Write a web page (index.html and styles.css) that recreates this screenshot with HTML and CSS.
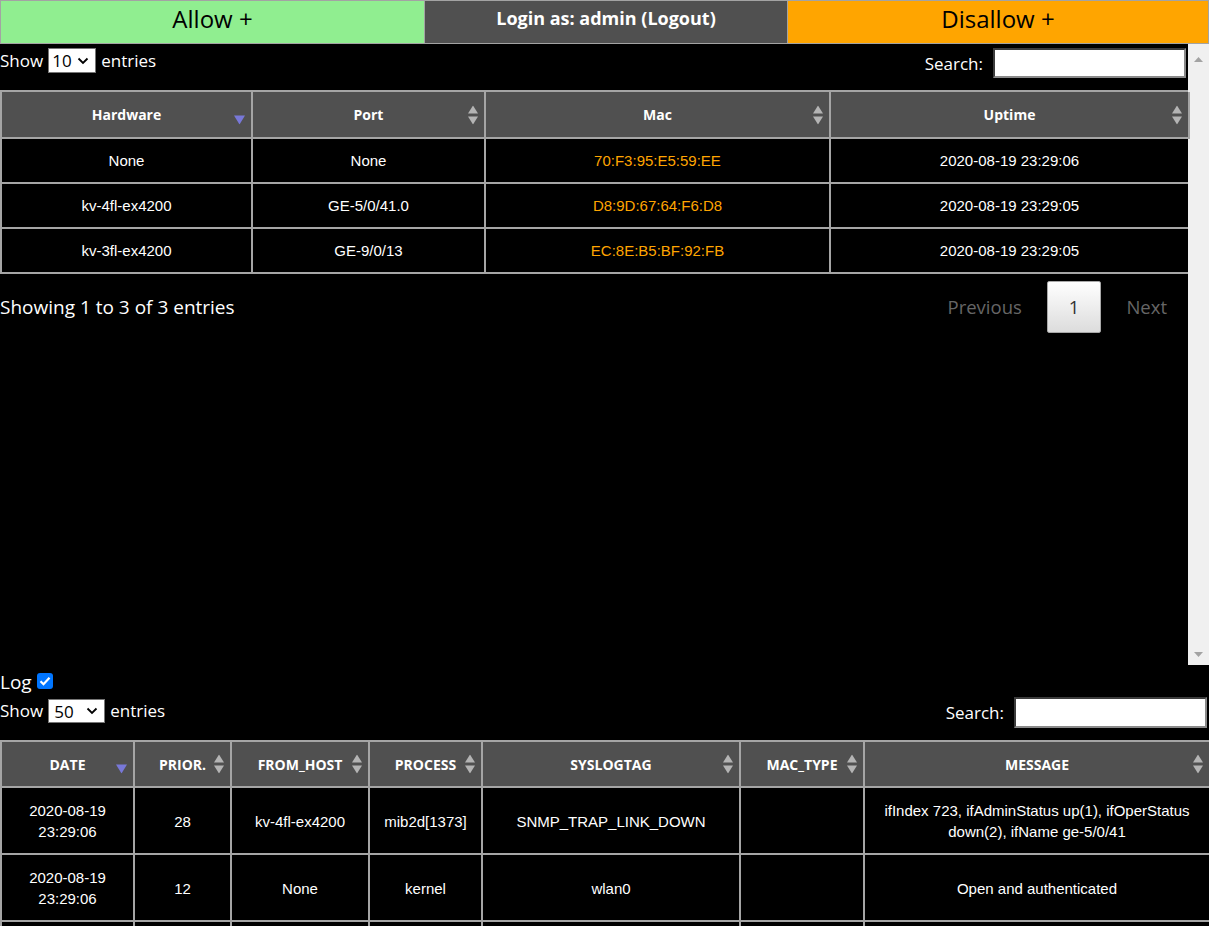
FILE: index.html
```html
<!DOCTYPE html>
<html lang="en">
<head>
<meta charset="utf-8">
<title>MAC access</title>
<link rel="stylesheet" href="styles.css">
</head>
<body>
<div class="topbar">
  <div class="tb allow">Allow +</div>
  <div class="tb login">Login as: admin (Logout)</div>
  <div class="tb disallow">Disallow +</div>
</div>

<div class="upper">
  <div class="upper-main">
    <div class="dt-top">
      <label class="length">Show <select class="sel sel10"><option>10</option></select> entries</label>
      <label class="search">Search: <input type="text" class="inp"></label>
    </div>
    <table class="dt dt-main">
      <colgroup><col class="w-hw"><col class="w-port"><col class="w-mac"><col class="w-up"></colgroup>
      <thead>
        <tr>
          <th>Hardware<svg class="sort desc" width="11" height="19" viewBox="0 0 11 19"><path d="M5.5 0L10.5 8H0.5Z"/><path d="M0 10H11L5.5 19Z"/></svg></th>
          <th>Port<svg class="sort" width="10" height="19" viewBox="0 0 10 19"><path d="M5 0L10 8H0Z"/><path d="M0 11H10L5 19Z"/></svg></th>
          <th>Mac<svg class="sort" width="10" height="19" viewBox="0 0 10 19"><path d="M5 0L10 8H0Z"/><path d="M0 11H10L5 19Z"/></svg></th>
          <th>Uptime<svg class="sort" width="10" height="19" viewBox="0 0 10 19"><path d="M5 0L10 8H0Z"/><path d="M0 11H10L5 19Z"/></svg></th>
        </tr>
      </thead>
      <tbody>
        <tr><td>None</td><td>None</td><td class="mac">70:F3:95:E5:59:EE</td><td>2020-08-19 23:29:06</td></tr>
        <tr><td>kv-4fl-ex4200</td><td>GE-5/0/41.0</td><td class="mac">D8:9D:67:64:F6:D8</td><td>2020-08-19 23:29:05</td></tr>
        <tr><td>kv-3fl-ex4200</td><td>GE-9/0/13</td><td class="mac">EC:8E:B5:BF:92:FB</td><td>2020-08-19 23:29:05</td></tr>
      </tbody>
    </table>
    <div class="dt-bottom">
      <div class="info">Showing 1 to 3 of 3 entries</div>
      <div class="paging">
        <span class="pg dis">Previous</span>
        <span class="pg cur">1</span>
        <span class="pg dis">Next</span>
      </div>
    </div>
  </div>
  <div class="vscroll">
    <svg width="9" height="5" viewBox="0 0 9 5"><path d="M4.5 0L9 5H0Z" fill="#a3a3a3"/></svg>
    <svg width="9" height="5" viewBox="0 0 9 5"><path d="M0 0H9L4.5 5Z" fill="#a3a3a3"/></svg>
  </div>
</div>

<div class="log-title">Log <input type="checkbox" class="chk" checked></div>
<div class="dt-top log-top">
  <label class="length">Show <select class="sel sel50"><option>50</option></select> entries</label>
  <label class="search">Search: <input type="text" class="inp"></label>
</div>
<table class="dt dt-log">
  <colgroup><col class="w-date"><col class="w-prio"><col class="w-host"><col class="w-proc"><col class="w-tag"><col class="w-mtype"><col class="w-msg"></colgroup>
  <thead>
    <tr>
      <th>DATE<svg class="sort desc" width="11" height="19" viewBox="0 0 11 19"><path d="M5.5 0L10.5 8H0.5Z"/><path d="M0 10H11L5.5 19Z"/></svg></th>
      <th>PRIOR.<svg class="sort" width="10" height="19" viewBox="0 0 10 19"><path d="M5 0L10 8H0Z"/><path d="M0 11H10L5 19Z"/></svg></th>
      <th>FROM_HOST<svg class="sort" width="10" height="19" viewBox="0 0 10 19"><path d="M5 0L10 8H0Z"/><path d="M0 11H10L5 19Z"/></svg></th>
      <th>PROCESS<svg class="sort" width="10" height="19" viewBox="0 0 10 19"><path d="M5 0L10 8H0Z"/><path d="M0 11H10L5 19Z"/></svg></th>
      <th>SYSLOGTAG<svg class="sort" width="10" height="19" viewBox="0 0 10 19"><path d="M5 0L10 8H0Z"/><path d="M0 11H10L5 19Z"/></svg></th>
      <th>MAC_TYPE<svg class="sort" width="10" height="19" viewBox="0 0 10 19"><path d="M5 0L10 8H0Z"/><path d="M0 11H10L5 19Z"/></svg></th>
      <th>MESSAGE<svg class="sort" width="10" height="19" viewBox="0 0 10 19"><path d="M5 0L10 8H0Z"/><path d="M0 11H10L5 19Z"/></svg></th>
    </tr>
  </thead>
  <tbody>
    <tr><td>2020-08-19 23:29:06</td><td>28</td><td>kv-4fl-ex4200</td><td>mib2d[1373]</td><td>SNMP_TRAP_LINK_DOWN</td><td></td><td>ifIndex 723, ifAdminStatus up(1), ifOperStatus down(2), ifName ge-5/0/41</td></tr>
    <tr><td>2020-08-19 23:29:06</td><td>12</td><td>None</td><td>kernel</td><td>wlan0</td><td></td><td>Open and authenticated</td></tr>
    <tr><td>2020-08-19 23:29:05</td><td>28</td><td>kv-3fl-ex4200</td><td>mib2d[1373]</td><td>SNMP_TRAP_LINK_DOWN</td><td></td><td>ifIndex 731, ifAdminStatus up(1), ifOperStatus down(2), ifName ge-9/0/13</td></tr>
  </tbody>
</table>
</body>
</html>
```
FILE: styles.css
```css
* { box-sizing: border-box; }
html, body { margin: 0; padding: 0; background: #000; overflow: hidden; }
body { font-family: "Open Sans", "Noto Sans", sans-serif; color: #fff; }

/* top bar */
.topbar {
  display: grid;
  grid-template-columns: 424px 363px 1fr;
  height: 44px;
  border-top: 1px solid #a3a3a3;
  border-bottom: 1px solid #a3a3a3;
}
.tb {
  display: flex;
  align-items: center;
  justify-content: center;
  border-left: 1px solid #a3a3a3;
}
.allow { background: #90ee90; color: #000; font-size: 24px; padding-bottom: 8px; }
.login { background: #505050; color: #fff; font-size: 18px; font-weight: 700; padding-bottom: 8px; }
.disallow { background: #ffa500; color: #000; font-size: 24px; padding-bottom: 8px; border-right: 1px solid #a3a3a3; }

/* upper scroll pane */
.upper { display: flex; height: 621px; }
.upper-main { flex: 1; min-width: 0; }
.vscroll {
  width: 21px;
  background: #f0f0f0;
  display: flex;
  flex-direction: column;
  justify-content: space-between;
  align-items: center;
  padding: 13px 0 8px;
}

/* controls */
.dt-top {
  display: flex;
  justify-content: space-between;
  align-items: flex-start;
  height: 46px;
  padding-top: 4px;
}
.length { display: flex; align-items: center; gap: 5px; font-size: 17px; line-height: 25px; }
.sel {
  appearance: none;
  -webkit-appearance: none;
  height: 25px;
  width: 48px;
  margin: 0;
  padding: 0 0 0 3px;
  border: 1px solid #767676;
  border-radius: 0;
  background: #fff url("data:image/svg+xml,%3Csvg xmlns='http://www.w3.org/2000/svg' width='12' height='8' viewBox='0 0 12 8'%3E%3Cpath d='M1.5 1.5l4.5 4.5 4.5-4.5' fill='none' stroke='%23000' stroke-width='1.8'/%3E%3C/svg%3E") no-repeat right 6px center;
  color: #000;
  font-family: "Open Sans", "Noto Sans", sans-serif;
  font-size: 17px;
  line-height: 23px;
}
.sel50 { width: 57px; height: 24px; padding-left: 5px; }
.search { display: flex; align-items: center; gap: 10px; font-size: 17px; margin-right: 2px; }
.inp {
  width: 193px;
  height: 30px;
  margin: 0;
  border: 2px solid;
  border-color: #3c3c3c #8a8a8a #8a8a8a #3c3c3c;
  background: #fff;
}

/* tables */
.dt {
  width: 100%;
  table-layout: fixed;
  border-collapse: separate;
  border-spacing: 0;
  border-top: 2px solid #a5a5a5;
  border-left: 2px solid #a5a5a5;
}
.dt th, .dt td {
  border-right: 2px solid #a5a5a5;
  border-bottom: 2px solid #a5a5a5;
  text-align: center;
  vertical-align: middle;
}
.dt th {
  position: relative;
  background: #505050;
  color: #fff;
  font-family: "Open Sans", "Noto Sans", sans-serif;
  font-size: 14px;
  font-weight: 700;
  white-space: nowrap;
  padding: 0 10px;
}
.dt td {
  font-family: "Liberation Sans", Arial, sans-serif;
  font-size: 15px;
  line-height: 21px;
  color: #fff;
  background: #000;
}
.dt-main th { height: 47px; }
.dt-main td { height: 45px; padding: 0 8px; }
.dt-main td.mac { color: #ffa500; }

.w-hw { width: 251px; }
.w-port { width: 233px; }
.w-mac { width: 345px; }
.w-up { width: 359px; }

.dt-log th { height: 46px; }
.dt-log td { padding: 12px 8px 11px; }
.w-date { width: 133px; }
.w-prio { width: 97px; }
.w-host { width: 138px; }
.w-proc { width: 113px; }
.w-tag { width: 258px; }
.w-mtype { width: 124px; }
.w-msg { width: 346px; }

.sort {
  position: absolute;
  right: 6px;
  top: 50%;
  transform: translateY(-50%);
}
.sort path { fill: #b4b4b4; }
.sort.desc path:first-child { fill: none; }
.sort.desc path:last-child { fill: #7878d8; }

/* bottom of the upper table */
.dt-bottom {
  display: flex;
  justify-content: space-between;
  align-items: center;
  padding-top: 6px;
}
.info { font-size: 19px; line-height: 26px; }
.paging { display: flex; align-items: center; margin-right: -2px; }
.pg {
  display: block;
  font-size: 18.5px;
  line-height: 26px;
  padding: 13px 22px;
  margin-left: 2px;
  border: 1px solid transparent;
  border-radius: 2px;
}
.pg.dis { color: #666; }
.pg.cur {
  color: #333;
  padding: 12px 21px;
  border-color: #a8a8a8;
  background: linear-gradient(to bottom, #ffffff 0%, #dcdcdc 100%);
}

/* log section */
.log-title {
  height: 32px;
  display: flex;
  align-items: center;
  gap: 5px;
  font-size: 19px;
  padding-top: 2px;
}
.chk {
  appearance: none;
  -webkit-appearance: none;
  width: 16px;
  height: 16px;
  margin: 0 0 2px;
  border-radius: 3px;
  background: #0075ff url("data:image/svg+xml,%3Csvg xmlns='http://www.w3.org/2000/svg' width='16' height='16' viewBox='0 0 16 16'%3E%3Cpath d='M3.5 8.2l3 3 6-6.5' fill='none' stroke='%23fff' stroke-width='2.2'/%3E%3C/svg%3E") no-repeat center;
}
.log-top { height: 43px; padding-top: 0; }
.log-top .length { margin-top: 1px; }
.log-top .inp { height: 31px; }
```
